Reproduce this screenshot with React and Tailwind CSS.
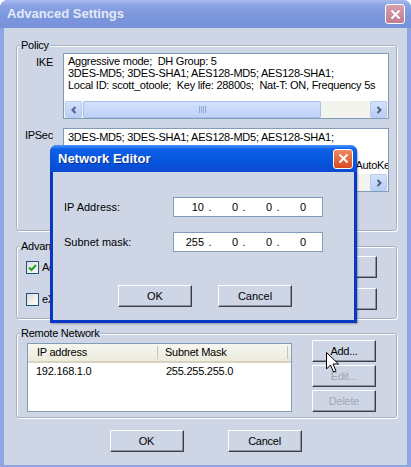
import React from 'react';

const face = "font-['Liberation_Sans',Arial,sans-serif]";

function Btn({ children, className = '', disabled = false }) {
  return (
    <div
      className={`flex items-center justify-center h-[22px] border border-t-white border-l-white border-r-[#3c3f46] border-b-[#3c3f46] shadow-[inset_-1px_-1px_0_#8d93a0] text-[11px] ${
        disabled ? 'text-[#a3a8b2]' : 'text-black'
      } ${className}`}
    >
      {children}
    </div>
  );
}

function Group({ title, className = '', children }) {
  return (
    <fieldset
      className={`border border-[#a9b2c4] rounded-[3px] shadow-[1px_1px_0_#fff,inset_1px_1px_0_#fff] ${className}`}
    >
      <legend className="ml-[3px] px-[1px] bg-[#ced6e6] text-[11px] leading-[13px] text-black">{title}</legend>
      {children}
    </fieldset>
  );
}

function Arrow({ dir }) {
  return (
    <div className="w-[17px] h-[17px] rounded-[2px] border border-[#b7cbf3] bg-[linear-gradient(to_bottom,#d4e2fb,#b9cdf5)] flex items-center justify-center">
      <svg width="8" height="8" viewBox="0 0 8 8">
        <path
          d={dir === 'left' ? 'M5.5 1 L2.5 4 L5.5 7' : 'M2.5 1 L5.5 4 L2.5 7'}
          fill="none"
          stroke="#4d6185"
          strokeWidth="2"
        />
      </svg>
    </div>
  );
}

function HScroll({ before, thumb }) {
  return (
    <div className="h-[17px] flex bg-[#f3f4ee] px-[1px]">
      <Arrow dir="left" />
      <div className="flex-1 flex">
        <div style={{ width: before }} />
        <div
          className="h-[17px] rounded-[2px] border border-[#a9c0ef] bg-[linear-gradient(to_bottom,#d2e0fb,#bed2f8)] flex items-center justify-center gap-[1px]"
          style={{ width: thumb }}
        >
          <div className="w-[1px] h-[7px] bg-[#93a9dc]" />
          <div className="w-[1px] h-[7px] bg-[#93a9dc]" />
          <div className="w-[1px] h-[7px] bg-[#93a9dc]" />
          <div className="w-[1px] h-[7px] bg-[#93a9dc]" />
        </div>
      </div>
      <Arrow dir="right" />
    </div>
  );
}

function CheckBox({ checked }) {
  return (
    <div className="w-[13px] h-[13px] border border-[#1c5180] bg-[linear-gradient(135deg,#dcdcd7,#fff)] flex items-center justify-center">
      {checked && (
        <svg width="9" height="9" viewBox="0 0 9 9">
          <path d="M1 4.5 L3.5 7 L8 2" fill="none" stroke="#21a121" strokeWidth="2" />
        </svg>
      )}
    </div>
  );
}

function IpField({ parts }) {
  return (
    <div className="w-[150px] h-[20px] border border-[#7f9db9] bg-white flex items-center pl-[4px] text-[11px]">
      <span className="w-[26px] text-right">{parts[0]}</span>
      <span className="w-[12px] text-center">.</span>
      <span className="w-[22px] text-right">{parts[1]}</span>
      <span className="w-[12px] text-center">.</span>
      <span className="w-[22px] text-right">{parts[2]}</span>
      <span className="w-[12px] text-center">.</span>
      <span className="w-[22px] text-right">{parts[3]}</span>
    </div>
  );
}

function CloseBtn({ inactive }) {
  return (
    <div
      className={`w-[20px] h-[20px] rounded-[3px] border border-white flex items-center justify-center ${
        inactive
          ? 'bg-[linear-gradient(to_bottom,#d7a0ae,#c07c91)]'
          : 'bg-[linear-gradient(to_bottom,#f08a60,#d84b22)]'
      }`}
    >
      <svg width="11" height="11" viewBox="0 0 11 11">
        <path d="M1.5 1.5 L9.5 9.5 M9.5 1.5 L1.5 9.5" stroke="#fff" strokeWidth="2" />
      </svg>
    </div>
  );
}

function NetworkEditor() {
  return (
    <div className="absolute left-[50px] top-[145px] w-[307px] h-[178px] rounded-t-[7px] bg-[#0837c4] px-[3px] pb-[3px] flex flex-col shadow-[1px_1px_2px_rgba(0,0,0,0.3)]">
      <div className="h-[27px] -mx-[3px] rounded-t-[7px] bg-[linear-gradient(to_bottom,#4c97ff_0%,#0d60e8_15%,#0855dd_60%,#0a4ad3_100%)] flex items-center justify-between pl-[8px] pr-[4px]">
        <span className="text-white font-bold text-[13px] [text-shadow:1px_1px_0_#0a2f8a]">Network Editor</span>
        <CloseBtn />
      </div>
      <div className="flex-1 bg-[#ced6e6] flex flex-col text-[11px] text-black">
        <div className="flex items-center pl-[11px] mt-[25px]">
          <span className="w-[109px]">IP Address:</span>
          <IpField parts={['10', '0', '0', '0']} />
        </div>
        <div className="flex items-center pl-[11px] mt-[15px]">
          <span className="w-[109px]">Subnet mask:</span>
          <IpField parts={['255', '0', '0', '0']} />
        </div>
        <div className="flex gap-[26px] ml-[65px] mt-[33px]">
          <Btn className="w-[74px]">OK</Btn>
          <Btn className="w-[74px]">Cancel</Btn>
        </div>
      </div>
    </div>
  );
}

function Cursor() {
  return (
    <svg className="absolute left-[326px] top-[352px]" width="14" height="22" viewBox="0 0 14 22">
      <path
        d="M0.5 0.5 L0.5 17 L4.5 13 L7.5 20 L10 19 L7 12 L12.5 12 Z"
        fill="#fff"
        stroke="#000"
        strokeWidth="1"
      />
    </svg>
  );
}

export default function App() {
  return (
    <div className={`${face} relative w-[411px] h-[467px] bg-[#8fa4e2] rounded-t-[8px] flex flex-col`}>
      <div className="h-[28px] rounded-t-[8px] bg-[linear-gradient(to_bottom,#a8bbee_0%,#8aa2e3_20%,#7b96dc_60%,#7893db_100%)] flex items-center justify-between pl-[7px] pr-[6px]">
        <span className="text-[#e3e9f8] font-bold text-[13px]">Advanced Settings</span>
        <CloseBtn inactive />
      </div>

      <div className="flex-1 mx-[4px] mb-[2px] bg-[#ced6e6] flex flex-col text-[11px] text-black tracking-[-0.25px]">
        <Group title="Policy" className="ml-[12px] mr-[10px] mt-[11px] pb-[38px]">
          <div className="grid grid-cols-[36px_326px] gap-x-[10px] gap-y-[9px] pt-[1px]">
            <div className="text-right pt-[3px] leading-[12px]">IKE</div>
            <div className="h-[66px] border border-[#7f9db9] bg-white flex flex-col">
              <div className="flex-1 px-[4px] pt-[1px] leading-[12px] whitespace-pre overflow-hidden">
                <div>Aggressive mode;  DH Group: 5</div>
                <div>3DES-MD5; 3DES-SHA1; AES128-MD5; AES128-SHA1;</div>
                <div>Local ID: scott_otoole;  Key life: 28800s;  Nat-T: ON, Frequency 5s</div>
              </div>
              <HScroll before={1} thumb={238} />
            </div>

            <div className="text-right pt-[1px] leading-[12px]">IPSec</div>
            <div className="h-[64px] border border-[#7f9db9] bg-white flex flex-col">
              <div className="flex-1 px-[4px] pt-[2px] leading-[12px] whitespace-pre overflow-hidden">
                <div>3DES-MD5; 3DES-SHA1; AES128-MD5; AES128-SHA1;</div>
                <div>PFS: OFF; Key life: 3600s</div>
                <div className="mt-[4px] flex justify-end -mr-[6px]">Mode: Tunnel; ESP; AutoKe</div>
              </div>
              <HScroll before={40} thumb={200} />
            </div>
          </div>
        </Group>

        <Group title="Advanced" className="ml-[12px] mr-[10px] mt-[9px] pb-[8px]">
          <div className="flex pl-[9px] pr-[19px] pt-[3px]">
            <div className="flex-1 flex flex-col gap-[10px]">
              <div className="h-[22px] flex items-center gap-[3px]">
                <CheckBox checked />
                <span>Activate keep alive</span>
              </div>
              <div className="h-[22px] flex items-center gap-[3px]">
                <CheckBox />
                <span>eXtended authentication</span>
              </div>
            </div>
            <div className="flex flex-col gap-[10px]">
              <Btn className="w-[110px]">Options...</Btn>
              <Btn className="w-[110px]">Settings...</Btn>
            </div>
          </div>
        </Group>

        <Group title="Remote Network" className="ml-[12px] mr-[10px] mt-[8px] pb-[5px]">
          <div className="flex pl-[10px] pr-[20px]">
            <div className="w-[265px] h-[69px] mt-[3px] border border-[#7f9db9] bg-white flex flex-col">
              <div className="h-[19px] flex items-center bg-[linear-gradient(to_bottom,#f7f7f1,#ebeadb)] border-b-[2px] border-[#d6d3c3]">
                <div className="w-[130px] pl-[9px] border-r border-[#c7c5b2] h-[13px] leading-[13px]">IP address</div>
                <div className="w-[130px] pl-[7px] border-r border-[#c7c5b2] h-[13px] leading-[13px]">Subnet Mask</div>
              </div>
              <div className="flex h-[14px] items-center mt-[1px]">
                <div className="w-[130px] pl-[8px]">192.168.1.0</div>
                <div className="w-[130px] pl-[8px]">255.255.255.0</div>
              </div>
            </div>
            <div className="ml-auto flex flex-col gap-[3px]">
              <Btn className="w-[64px]">Add...</Btn>
              <Btn className="w-[64px]" disabled>Edit...</Btn>
              <Btn className="w-[64px]" disabled>Delete</Btn>
            </div>
          </div>
        </Group>

        <div className="flex justify-center gap-[44px] mt-[12px]">
          <Btn className="w-[74px]">OK</Btn>
          <Btn className="w-[74px]">Cancel</Btn>
        </div>
      </div>

      <NetworkEditor />
      <Cursor />
    </div>
  );
}
